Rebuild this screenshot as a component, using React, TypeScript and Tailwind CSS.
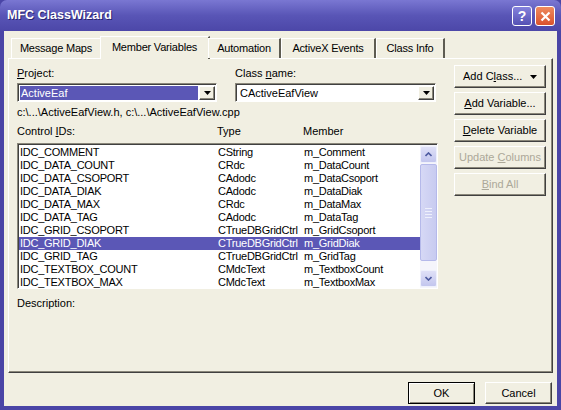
import React from "react"

const rows: [string, string, string][] = [
    ["IDC_COMMENT", "CString", "m_Comment"],
    ["IDC_DATA_COUNT", "CRdc", "m_DataCount"],
    ["IDC_DATA_CSOPORT", "CAdodc", "m_DataCsoport"],
    ["IDC_DATA_DIAK", "CAdodc", "m_DataDiak"],
    ["IDC_DATA_MAX", "CRdc", "m_DataMax"],
    ["IDC_DATA_TAG", "CAdodc", "m_DataTag"],
    ["IDC_GRID_CSOPORT", "CTrueDBGridCtrl", "m_GridCsoport"],
    ["IDC_GRID_DIAK", "CTrueDBGridCtrl", "m_GridDiak"],
    ["IDC_GRID_TAG", "CTrueDBGridCtrl", "m_GridTag"],
    ["IDC_TEXTBOX_COUNT", "CMdcText", "m_TextboxCount"],
    ["IDC_TEXTBOX_MAX", "CMdcText", "m_TextboxMax"],
]

const tabs = [
    { label: "Message Maps", w: "w-[91px]" },
    { label: "Member Variables", w: "w-[110px]", active: true },
    { label: "Automation", w: "w-[73px]" },
    { label: "ActiveX Events", w: "w-[95px]" },
    { label: "Class Info", w: "w-[69px]" },
]

const DownTriangle = () => (
    <svg width="7" height="4" viewBox="0 0 7 4">
        <path d="M0 0h7L3.5 4z" fill="#000" />
    </svg>
)

const DropButton = () => (
    <div className="w-[16px] h-full flex items-center justify-center bg-[#f1efe2] border border-t-white border-l-white border-r-[#404040] border-b-[#404040] shadow-[inset_-1px_-1px_0_#8a877a]">
        <DownTriangle />
    </div>
)

const SideButton = ({ children, disabled }: { children: React.ReactNode; disabled?: boolean }) => (
    <div
        className={
            "h-[23px] flex items-center justify-center bg-[#f1efe2] border border-t-white border-l-white border-r-[#404040] border-b-[#404040] shadow-[inset_-1px_-1px_0_#8a877a] " +
            (disabled ? "text-[#aca899]" : "text-black")
        }
    >
        {children}
    </div>
)

const ScrollArrow = ({ up }: { up?: boolean }) => (
    <div className="h-[17px] w-full flex items-center justify-center bg-gradient-to-b from-[#dfe0f7] to-[#c3c6ee] border border-[#eef0fc] rounded-[2px]">
        <svg width="7" height="5" viewBox="0 0 7 5">
            <path d={up ? "M0.5 4L3.5 1L6.5 4" : "M0.5 1L3.5 4L6.5 1"} fill="none" stroke="#4d5aa0" strokeWidth="1.6" />
        </svg>
    </div>
)

export default function App() {
    return (
        <div className="w-[561px] h-[410px] bg-[#4a45a6] flex flex-col font-['Liberation_Sans',Arial,sans-serif] text-[11px] text-black overflow-hidden">
            {/* title bar */}
            <div className="h-[31px] shrink-0 flex items-center justify-between pl-[7px] pr-[6px] rounded-t-[7px] bg-gradient-to-b from-[#7a77d2] via-[#5955b6] to-[#4c47a8]">
                <span className="text-white font-bold text-[12.5px] [text-shadow:1px_1px_0_#29256e]">MFC ClassWizard</span>
                <div className="flex gap-[3px] mt-[1px]">
                    <div className="w-[20px] h-[20px] rounded-[3px] border border-white bg-gradient-to-b from-[#8582dc] to-[#5551b4] flex items-center justify-center text-white font-bold text-[14px] leading-none">
                        ?
                    </div>
                    <div className="w-[20px] h-[20px] rounded-[3px] border border-white bg-gradient-to-b from-[#ee8a5e] to-[#d9512c] flex items-center justify-center">
                        <svg width="11" height="11" viewBox="0 0 11 11">
                            <path d="M1.5 1.5l8 8M9.5 1.5l-8 8" stroke="#fff" strokeWidth="2.2" />
                        </svg>
                    </div>
                </div>
            </div>

            {/* body */}
            <div className="flex-1 mx-[4px] mb-[4px] bg-[#f1efe2] flex flex-col px-[4px] pt-[5px]">
                {/* tabs */}
                <div className="h-[22px] flex items-end pl-[3px] relative z-10">
                    {tabs.map((t) => (
                        <div
                            key={t.label}
                            className={
                                t.w +
                                " flex items-center justify-center tracking-[-0.2px] border-t border-l border-t-white border-l-white border-r-2 border-r-[#5e5c52] bg-[#f1efe2] " +
                                (t.active ? "h-[23px] -mb-[1px] -mx-[2px] px-[2px] pb-[2px]" : "h-[20px]")
                            }
                        >
                            {t.label}
                        </div>
                    ))}
                </div>

                {/* panel */}
                <div className="h-[315px] border border-t-white border-l-white border-r-[#404040] border-b-[#404040] shadow-[inset_-1px_-1px_0_#8a877a] flex pl-[8px] pr-[5px]">
                    {/* left column */}
                    <div className="w-[421px] flex flex-col pt-[7px]">
                        <div className="flex gap-[18px]">
                            <div className="w-[200px] flex flex-col">
                                <div className="h-[14px] leading-[14px]"><u>P</u>roject:</div>
                                <div className="mt-[3px] h-[19px] flex items-stretch bg-white border border-t-[#8a877a] border-l-[#8a877a] border-b-white border-r-white shadow-[inset_1px_1px_0_#404040] p-[1px] pl-[2px] pt-[2px]">
                                    <div className="flex-1 bg-[#5b57b6] text-white leading-[15px] pl-[1px] mr-[1px]">ActiveEaf</div>
                                    <DropButton />
                                </div>
                            </div>
                            <div className="w-[201px] flex flex-col">
                                <div className="h-[14px] leading-[14px]">Class <u>n</u>ame:</div>
                                <div className="mt-[3px] h-[19px] flex items-stretch bg-white border border-t-[#8a877a] border-l-[#8a877a] border-b-white border-r-white shadow-[inset_1px_1px_0_#404040] p-[1px] pl-[2px] pt-[2px]">
                                    <div className="flex-1 leading-[15px] pl-[2px]">CActiveEafView</div>
                                    <DropButton />
                                </div>
                            </div>
                        </div>
                        <div className="mt-[3px] h-[14px] leading-[14px]">c:\...\ActiveEafView.h, c:\...\ActiveEafView.cpp</div>
                        <div className="mt-[5px] h-[14px] leading-[14px] grid grid-cols-[200px_86px_1fr]">
                            <span>Control <u>I</u>Ds:</span>
                            <span>Type</span>
                            <span>Member</span>
                        </div>
                        {/* list */}
                        <div className="mt-[5px] h-[146px] bg-white border border-t-[#8a877a] border-l-[#8a877a] border-b-white border-r-white shadow-[inset_1px_1px_0_#404040] flex pl-[1px] pt-[1px] overflow-hidden">
                            <div className="flex-1 pt-[1px] overflow-hidden">
                                {rows.map((r, i) => (
                                    <div
                                        key={r[0]}
                                        className={
                                            "h-[13px] leading-[13px] grid grid-cols-[198px_86px_1fr] pl-[1px] whitespace-nowrap tracking-[-0.25px] " +
                                            (i === 7 ? "bg-[#5b57b6] text-white" : "")
                                        }
                                    >
                                        <span>{r[0]}</span>
                                        <span>{r[1]}</span>
                                        <span>{r[2]}</span>
                                    </div>
                                ))}
                            </div>
                            {/* scrollbar */}
                            <div className="w-[17px] flex flex-col bg-[#f5f5fb] py-[1px]">
                                <ScrollArrow up />
                                <div className="mt-[1px] h-[97px] bg-gradient-to-r from-[#d6d8f5] to-[#c8cbf0] border border-[#b5b9ea] rounded-[2px] flex flex-col items-center justify-center gap-[2px]">
                                    <div className="w-[7px] h-[1px] bg-[#eef0fc]" />
                                    <div className="w-[7px] h-[1px] bg-[#eef0fc]" />
                                    <div className="w-[7px] h-[1px] bg-[#eef0fc]" />
                                    <div className="w-[7px] h-[1px] bg-[#eef0fc]" />
                                </div>
                                <div className="flex-1" />
                                <ScrollArrow />
                            </div>
                        </div>
                        <div className="mt-[7px] h-[14px] leading-[14px]">Description:</div>
                    </div>

                    {/* right column */}
                    <div className="ml-[16px] w-[92px] flex flex-col gap-[4px] pt-[6px]">
                        <SideButton>
                            <span className="flex-1 pl-[8px]">Add C<u>l</u>ass...</span>
                            <span className="pr-[8px] flex items-center"><DownTriangle /></span>
                        </SideButton>
                        <SideButton><span><u>A</u>dd Variable...</span></SideButton>
                        <SideButton><span><u>D</u>elete Variable</span></SideButton>
                        <SideButton disabled><span>Update <u>C</u>olumns</span></SideButton>
                        <SideButton disabled><span><u>B</u>ind All</span></SideButton>
                    </div>
                </div>

                {/* bottom buttons */}
                <div className="mt-[9px] flex justify-end gap-[10px] pr-[1px]">
                    <div className="w-[67px] h-[22px] flex items-center justify-center bg-[#f1efe2] border border-black shadow-[inset_1px_1px_0_#fff,inset_-1px_-1px_0_#8a877a]">
                        OK
                    </div>
                    <div className="w-[67px] h-[22px] flex items-center justify-center bg-[#f1efe2] border border-t-white border-l-white border-r-[#404040] border-b-[#404040] shadow-[inset_-1px_-1px_0_#8a877a]">
                        Cancel
                    </div>
                </div>
            </div>
        </div>
    )
}
